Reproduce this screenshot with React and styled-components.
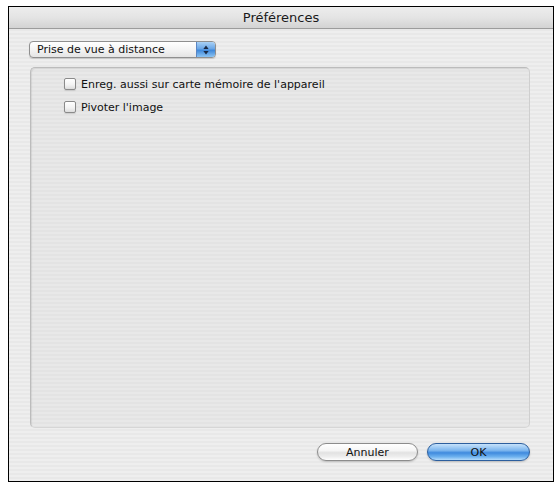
import React from "react";
import styled, { createGlobalStyle } from "styled-components";

const GlobalStyle = createGlobalStyle`
  html, body {
    margin: 0;
    padding: 0;
    background: #ffffff;
  }
  body {
    font-family: "DejaVu Sans", "Liberation Sans", sans-serif;
    font-size: 11px;
    color: #111;
  }
`;

const pinstripe = `repeating-linear-gradient(
  to bottom,
  #eeeeee 0px,
  #eeeeee 2px,
  #e8e8e8 2px,
  #e8e8e8 4px
)`;

const Window = styled.div`
  margin: 6px 0 0 8px;
  width: 546px;
  height: 476px;
  box-sizing: border-box;
  border: 1px solid #000;
  background: ${pinstripe};
  display: flex;
  flex-direction: column;
`;

const TitleBar = styled.div`
  height: 22px;
  flex: none;
  border-bottom: 1px solid #9c9c9c;
  background: linear-gradient(to bottom, #ededed 0%, #e4e4e4 50%, #d3d3d3 100%);
  display: flex;
  align-items: center;
  justify-content: center;
  padding-bottom: 1px;
  box-sizing: border-box;
  font-size: 13px;
  color: #1a1a1a;
`;

const Body = styled.div`
  flex: 1;
  display: flex;
  flex-direction: column;
  padding: 12px 23px 20px 20px;
  min-height: 0;
`;

const Popup = styled.div`
  width: 187px;
  height: 17px;
  box-sizing: border-box;
  border: 1px solid #8f8f8f;
  border-radius: 4px;
  display: flex;
  overflow: hidden;
  background: linear-gradient(to bottom, #ffffff 0%, #f4f4f4 50%, #e4e4e4 100%);
  box-shadow: 0 1px 1px rgba(0, 0, 0, 0.15);
`;

const PopupLabel = styled.span`
  flex: 1;
  padding-left: 7px;
  line-height: 15px;
  white-space: nowrap;
`;

const PopupArrows = styled.span`
  width: 18px;
  flex: none;
  border-left: 1px solid #5a86c4;
  background: linear-gradient(to bottom, #a9d1f6 0%, #6aa6e6 45%, #3f88da 55%, #8cc4f3 100%);
  display: flex;
  align-items: center;
  justify-content: center;
`;

const GroupBox = styled.div`
  flex: 1;
  margin: 9px 0 0 1px;
  border: 1px solid #bcbcbc;
  border-bottom-color: #d6d6d6;
  border-right-color: #cfcfcf;
  border-radius: 5px;
  background: repeating-linear-gradient(
    to bottom,
    #e8e8e8 0px,
    #e8e8e8 2px,
    #e3e3e3 2px,
    #e3e3e3 4px
  );
  box-shadow: inset 1px 1px 1px rgba(0, 0, 0, 0.08);
  padding: 9px 0 0 33px;
  display: flex;
  flex-direction: column;
  gap: 9px;
`;

const CheckRow = styled.label`
  display: flex;
  align-items: center;
  gap: 5px;
  height: 14px;
`;

const Box = styled.span`
  width: 12px;
  height: 12px;
  box-sizing: border-box;
  border: 1px solid #8a8a8a;
  border-radius: 2px;
  background: linear-gradient(to bottom, #ffffff 0%, #f2f2f2 60%, #dcdcdc 100%);
  box-shadow: 0 1px 1px rgba(0, 0, 0, 0.12);
`;

const Footer = styled.div`
  display: flex;
  justify-content: flex-end;
  gap: 9px;
  margin-top: 15px;
`;

const Button = styled.button`
  width: ${(p) => p.$width}px;
  height: 18px;
  box-sizing: border-box;
  border-radius: 9px;
  font-family: "DejaVu Sans", "Liberation Sans", sans-serif;
  font-size: 11px;
  color: #111;
  padding: 0;
  border: 1px solid ${(p) => (p.$primary ? "#2d5f9e" : "#8c8c8c")};
  background: ${(p) =>
    p.$primary
      ? "linear-gradient(to bottom, #c6e2fb 0%, #7db6ee 40%, #3f8ade 55%, #6eb2ef 80%, #b6dcfb 100%)"
      : "linear-gradient(to bottom, #ffffff 0%, #f6f6f6 40%, #e2e2e2 55%, #eeeeee 80%, #ffffff 100%)"};
  box-shadow: 0 1px 2px rgba(0, 0, 0, 0.2);
`;

const Arrows = () => (
  <svg width="6" height="10" viewBox="0 0 6 10">
    <path d="M3 0.5 L5.6 4 L0.4 4 Z" fill="#1b2a44" />
    <path d="M3 9.5 L5.6 6 L0.4 6 Z" fill="#1b2a44" />
  </svg>
);

export default function App() {
  return (
    <>
      <GlobalStyle />
      <Window>
        <TitleBar>Préférences</TitleBar>
        <Body>
          <Popup>
            <PopupLabel>Prise de vue à distance</PopupLabel>
            <PopupArrows>
              <Arrows />
            </PopupArrows>
          </Popup>
          <GroupBox>
            <CheckRow>
              <Box />
              Enreg. aussi sur carte mémoire de l'appareil
            </CheckRow>
            <CheckRow>
              <Box />
              Pivoter l'image
            </CheckRow>
          </GroupBox>
          <Footer>
            <Button $width={101}>Annuler</Button>
            <Button $width={103} $primary>
              OK
            </Button>
          </Footer>
        </Body>
      </Window>
    </>
  );
}
